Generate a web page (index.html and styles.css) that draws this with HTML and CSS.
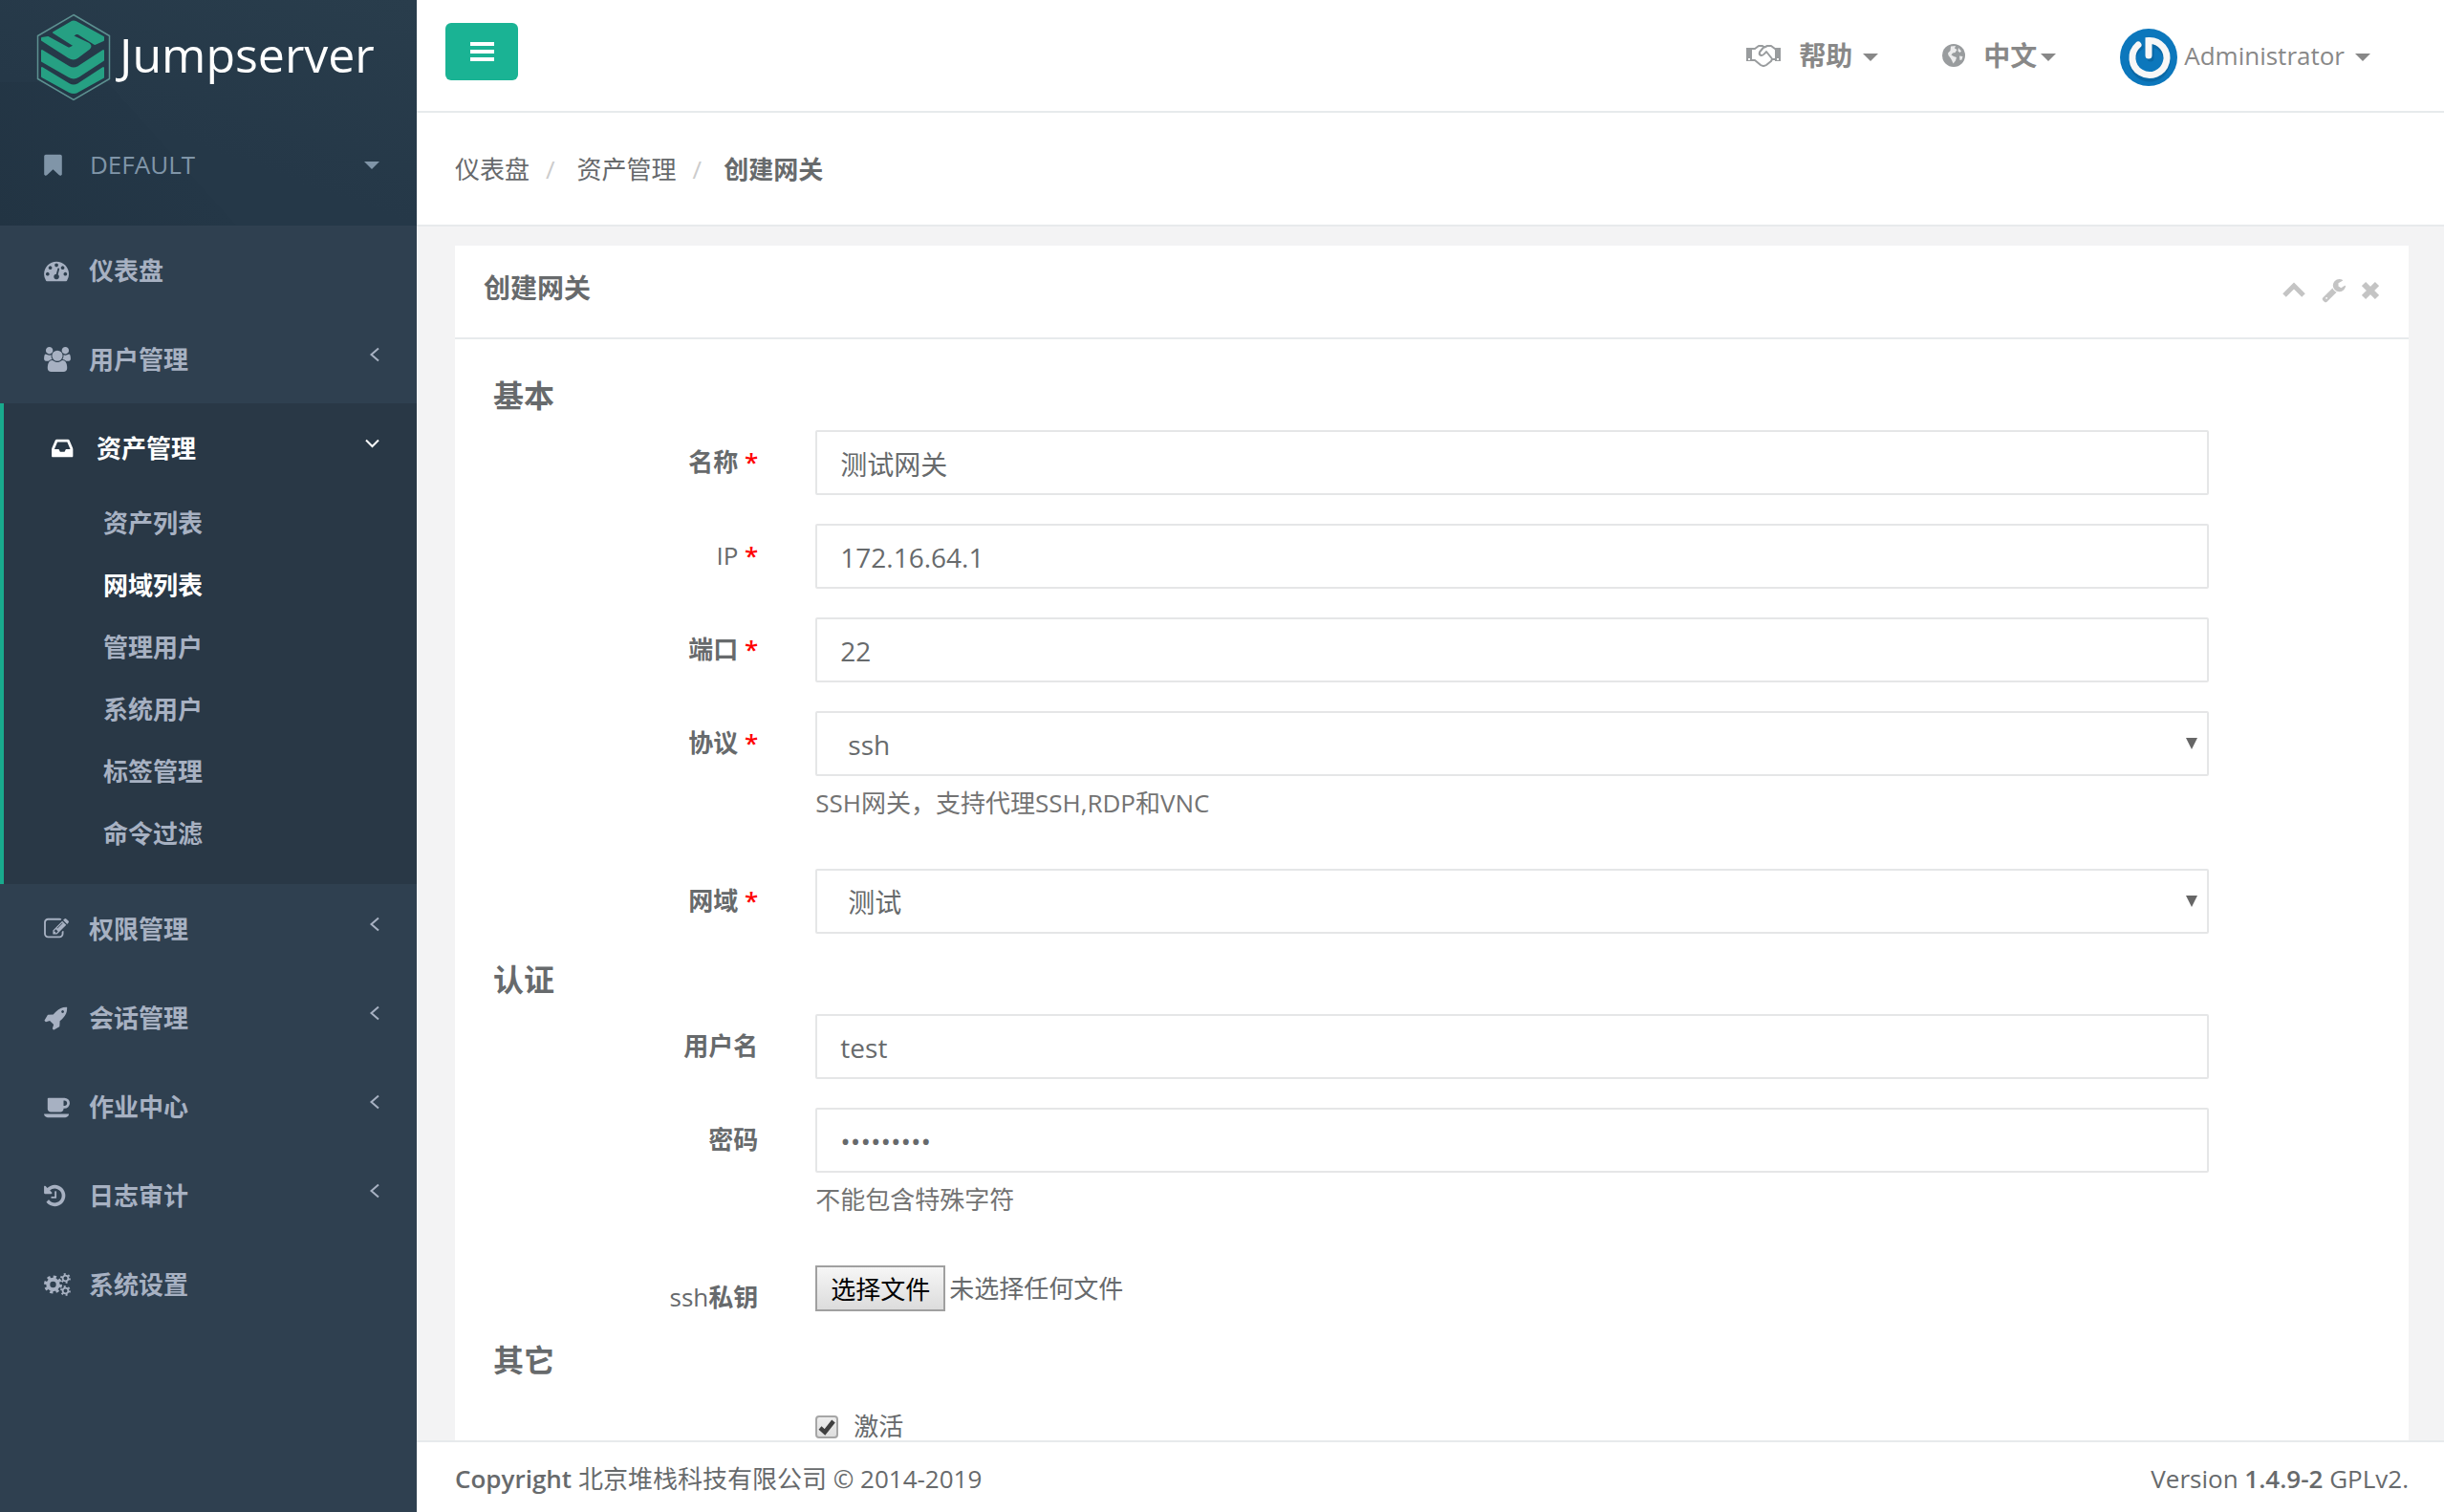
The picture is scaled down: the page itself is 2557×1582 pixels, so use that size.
FILE: index.html
```html
<!DOCTYPE html>
<html lang="zh-CN">
<head>
<meta charset="utf-8">
<title>创建网关 - Jumpserver</title>
<link rel="stylesheet" href="styles.css">
</head>
<body>
<div class="app">
  <aside class="sidebar">
    <div class="brand">
      <a class="logo" href="#">
        <svg class="logo-mark" viewBox="0 0 78 92" aria-hidden="true">
          <path d="M39 1.500 76.500 23.500V68.500L39 90.500 1.500 68.500V23.500Z" fill="none" stroke="#5d9191" stroke-width="1.500"/>
          <g fill="#26a083" stroke="#26a083" stroke-width="2" stroke-linejoin="round">
            <path d="M37 9Q39 8 41 9L70 25V28L61 32 42 20 38 24 55 32Q58 34 55 37L43 46Q39 49 34 46L6 28V26L12 25 34 37 40 34 18 20Z"/>
            <path d="M6 39 34 56Q39 59 44 56L70 39V49L44 66Q39 69 34 66L6 50Z"/>
            <path d="M6 57 34 74Q39 77 44 74L70 57V67L43 82Q39 84 35 82L6 66Z"/>
          </g>
        </svg>
        <span class="logo-text">Jumpserver</span>
      </a>
      <button class="org" type="button">
        <svg class="icon org-icon" viewBox="256 0 1280 1792" aria-hidden="true"><path d="M1420 128q23 0 44 9 33 13 52.500 41t19.500 62v1289q0 34-19.500 62t-52.500 41q-19 8-44 8-48 0-83-32l-441-424-441 424q-36 33-83 33-23 0-44-9-33-13-52.500-41t-19.500-62v-1289q0-34 19.500-62t52.500-41q21-9 44-9h1048z"/></svg>
        <span class="org-name">DEFAULT</span>
        <span class="caret"></span>
      </button>
    </div>
    <nav>
      <ul class="menu">
        <li><a class="menu-link" href="#">
          <svg class="icon" viewBox="0 0 1920 1792" aria-hidden="true"><path d="M384 1152q0-53-37.500-90.500t-90.500-37.500-90.500 37.500-37.500 90.500 37.500 90.500 90.500 37.500 90.500-37.500 37.500-90.500zm192-448q0-53-37.500-90.500t-90.500-37.500-90.500 37.500-37.500 90.500 37.500 90.500 90.500 37.500 90.500-37.500 37.500-90.500zm428 481l101-382q6-26-7.500-48.500t-38.500-29.500-48 6.500-30 39.500l-101 382q-60 5-107 43.500t-63 98.500q-20 77 20 146t117 89 146-20 89-117q16-60-6-117t-72-91zm660-33q0-53-37.500-90.500t-90.500-37.500-90.500 37.500-37.500 90.500 37.500 90.500 90.500 37.500 90.500-37.500 37.500-90.500zm-640-640q0-53-37.500-90.500t-90.500-37.500-90.500 37.500-37.500 90.500 37.500 90.500 90.500 37.500 90.500-37.500 37.500-90.500zm448 192q0-53-37.500-90.500t-90.500-37.500-90.500 37.500-37.500 90.500 37.500 90.500 90.500 37.500 90.500-37.500 37.500-90.500zm320 448q0 261-141 483-19 29-54 29h-1402q-35 0-54-29-141-221-141-483 0-182 71-348t191-286 286-191 348-71 348 71 286 191 191 286 71 348z"/></svg>
          <span class="menu-text">仪表盘</span></a></li>
        <li><a class="menu-link" href="#">
          <svg class="icon" viewBox="-64 0 1920 1792" aria-hidden="true"><path d="M529 896q-162 5-265 128h-134q-82 0-138-40.500t-56-118.500q0-353 124-353 6 0 43.500 21t97.500 42.500 119 21.500q67 0 133-23-5 37-5 66 0 139 81 256zm1071 637q0 120-73 189.500t-194 69.500h-874q-121 0-194-69.500t-73-189.500q0-53 3.500-103.500t14-109 26.500-108.500 43-97.500 62-81 85.500-53.500 111.500-20q10 0 43 21.500t73 48 107 48 135 21.500 135-21.500 107-48 73-48 43-21.500q61 0 111.500 20t85.500 53.500 62 81 43 97.500 26.500 108.500 14 109 3.500 103.500zm-1024-1277q0 106-75 181t-181 75-181-75-75-181 75-181 181-75 181 75 75 181zm704 384q0 159-112.500 271.500t-271.500 112.500-271.500-112.500-112.500-271.500 112.500-271.500 271.500-112.500 271.500 112.500 112.500 271.500zm576 225q0 78-56 118.500t-138 40.500h-134q-103-123-265-128 81-117 81-256 0-29-5-66 66 23 133 23 59 0 119-21.500t97.500-42.500 43.500-21q124 0 124 353zm-128-609q0 106-75 181t-181 75-181-75-75-181 75-181 181-75 181 75 75 181z"/></svg>
          <span class="menu-text">用户管理</span>
          <svg class="arrow" viewBox="0 0 16 16" aria-hidden="true"><path d="M14 1.500 6.500 8 14 14.500"/></svg></a></li>
        <li class="active"><a class="menu-link" href="#">
          <svg class="icon" viewBox="128 0 1920 1792" aria-hidden="true"><path d="M1151 960h316q-1-3-2.500-8.500t-2.500-7.500l-212-496h-708l-212 496q-1 3-2.500 8.500t-2.500 7.500h316l95 192h320zm513 30v482q0 26-19 45t-45 19h-1408q-26 0-45-19t-19-45v-482q0-62 25-123l238-552q10-25 36.500-42t52.500-17h832q26 0 52.500 17t36.500 42l238 552q25 61 25 123z"/></svg>
          <span class="menu-text">资产管理</span>
          <svg class="arrow" viewBox="0 0 16 16" aria-hidden="true"><path d="M1 4.500 7.500 11 14 4.500"/></svg></a>
          <ul class="submenu">
            <li><a href="#">资产列表</a></li>
            <li><a class="current" href="#">网域列表</a></li>
            <li><a href="#">管理用户</a></li>
            <li><a href="#">系统用户</a></li>
            <li><a href="#">标签管理</a></li>
            <li><a href="#">命令过滤</a></li>
          </ul></li>
        <li><a class="menu-link" href="#">
          <svg class="icon" viewBox="0 0 1920 1792" aria-hidden="true"><path d="M888 1184l116-116-152-152-116 116v56h96v96h56zm440-720q-16-16-33 1l-350 350q-17 17-1 33t33-1l350-350q17-17 1-33zm80 594v190q0 119-84.500 203.500t-203.500 84.500h-832q-119 0-203.500-84.500t-84.500-203.500v-832q0-119 84.500-203.500t203.500-84.500h832q63 0 117 25 15 7 18 23 3 17-9 29l-49 49q-14 14-32 8-23-6-45-6h-832q-66 0-113 47t-47 113v832q0 66 47 113t113 47h832q66 0 113-47t47-113v-126q0-13 9-22l64-64q15-15 35-7t20 29zm-96-738l288 288-672 672h-288v-288zm444 132l-92 92-288-288 92-92q28-28 68-28t68 28l152 152q28 28 28 68t-28 68z"/></svg>
          <span class="menu-text">权限管理</span>
          <svg class="arrow" viewBox="0 0 16 16" aria-hidden="true"><path d="M14 1.500 6.500 8 14 14.500"/></svg></a></li>
        <li><a class="menu-link" href="#">
          <svg class="icon" viewBox="0 0 1920 1792" aria-hidden="true"><path d="M1440 448q0-40-28-68t-68-28-68 28-28 68 28 68 68 28 68-28 28-68zm224-288q0 249-75.500 430.500t-253.500 360.500q-81 80-195 176l-20 379q-2 16-16 26l-384 224q-7 4-16 4-12 0-23-9l-64-64q-13-14-8-32l85-276-281-281-276 85q-3 1-9 1-14 0-23-9l-64-64q-17-19-5-39l224-384q10-14 26-16l379-20q96-114 176-195 188-187 358-258t431-71q14 0 24 9.500t10 22.500z"/></svg>
          <span class="menu-text">会话管理</span>
          <svg class="arrow" viewBox="0 0 16 16" aria-hidden="true"><path d="M14 1.500 6.500 8 14 14.500"/></svg></a></li>
        <li><a class="menu-link" href="#">
          <svg class="icon" viewBox="0 0 1920 1792" aria-hidden="true"><path d="M1664 640q0-80-56-136t-136-56h-64v384h64q80 0 136-56t56-136zm-1664 768h1792q0 106-75 181t-181 75h-1280q-106 0-181-75t-75-181zm1856-768q0 159-112.500 271.500t-271.500 112.500h-64v32q0 92-66 158t-158 66h-704q-92 0-158-66t-66-158v-736q0-26 19-45t45-19h1152q159 0 271.500 112.500t112.500 271.500z"/></svg>
          <span class="menu-text">作业中心</span>
          <svg class="arrow" viewBox="0 0 16 16" aria-hidden="true"><path d="M14 1.500 6.500 8 14 14.500"/></svg></a></li>
        <li><a class="menu-link" href="#">
          <svg class="icon" viewBox="128 0 1920 1792" aria-hidden="true"><path d="M1664 896q0 156-61 298t-164 245-245 164-298 61q-172 0-327-72.500t-264-204.500q-7-10-6.500-22.500t8.500-20.500l137-138q10-9 25-9 16 2 23 12 73 95 179 147t225 52q104 0 198.500-40.500t163.500-109.500 109.500-163.500 40.500-198.500-40.500-198.500-109.500-163.500-163.500-109.500-198.500-40.500q-98 0-188 35.500t-160 101.500l137 138q31 30 14 69-17 40-59 40h-448q-26 0-45-19t-19-45v-448q0-42 40-59 39-17 69 14l130 129q107-101 244.500-156.500t284.500-55.500q156 0 298 61t245 164 164 245 61 298zm-640-288v448q0 14-9 23t-23 9h-320q-14 0-23-9t-9-23v-64q0-14 9-23t23-9h224v-352q0-14 9-23t23-9h64q14 0 23 9t9 23z"/></svg>
          <span class="menu-text">日志审计</span>
          <svg class="arrow" viewBox="0 0 16 16" aria-hidden="true"><path d="M14 1.500 6.500 8 14 14.500"/></svg></a></li>
        <li><a class="menu-link" href="#">
          <svg class="icon" viewBox="0 0 28 26" aria-hidden="true">
            <g fill="none" stroke="currentColor">
              <circle cx="9.500" cy="13" r="5.200" stroke-width="4"/>
              <circle cx="9.500" cy="13" r="8" stroke-width="3" stroke-dasharray="3.200 3.083"/>
              <circle cx="22.500" cy="6.500" r="2.900" stroke-width="1.800"/>
              <circle cx="22.500" cy="6.500" r="4.500" stroke-width="1.800" stroke-dasharray="2 2.712"/>
              <circle cx="22.500" cy="19.500" r="2.900" stroke-width="1.800"/>
              <circle cx="22.500" cy="19.500" r="4.500" stroke-width="1.800" stroke-dasharray="2 2.712"/>
            </g></svg>
          <span class="menu-text">系统设置</span></a></li>
      </ul>
    </nav>
  </aside>

  <div class="page">
    <header class="topbar">
      <button class="toggle" type="button" aria-label="切换菜单">
        <svg viewBox="0 0 25 20" aria-hidden="true"><path d="M0 2H25M0 10H25M0 18H25" stroke="#fff" stroke-width="4"/></svg>
      </button>
      <div class="top-links">
        <a class="top-link help" href="#">
          <svg class="hands" viewBox="0 0 36 24" aria-hidden="true">
            <path d="M0 4H6V18H0ZM30 4H36V18H30Z" fill="currentColor"/>
            <g fill="none" stroke="currentColor" stroke-width="2" stroke-linejoin="round" stroke-linecap="round">
              <path d="M6 5H9L13 2H17L19 3.500 22 2H26L30 5M6 17H9L15 22Q18 24 21 22L26 18 27 16H30"/>
              <path d="M18.500 3 14 8.500Q13 11 15.500 12 18 12 21 8L27 15.500"/>
            </g>
            <path d="M2 15h2v2H2zM32 15h2v2h-2z" fill="#fff"/>
          </svg>
          <strong>帮助</strong><span class="caret"></span></a>
        <a class="top-link lang" href="#">
          <svg class="globe" viewBox="0 0 24 24" aria-hidden="true">
            <circle cx="12" cy="12" r="12" fill="currentColor"/>
            <path d="M9 2.500 14 2 13 4.500 15.500 6 13.500 9 11 9.500 9.500 11.500 12 13 15 14 14 17.500 11.500 20.500 10 17 8.500 14.500 6.500 12 6 9.500 8.500 7ZM17 4 20 7.500 18.500 9 16.500 7.500ZM18 12.500 21.500 13 20.500 16.500 18.500 17Z" fill="#fff" opacity=".8"/>
          </svg>
          <strong>中文</strong><span class="caret"></span></a>
        <a class="top-link user" href="#">
          <svg class="avatar" viewBox="0 0 60 60" aria-hidden="true">
            <circle cx="30" cy="30" r="30" fill="#0c77bc"/>
            <g fill="none" stroke-width="7" stroke-linecap="round">
              <g stroke="#075a92" opacity=".5"><path d="M20 17A18 18 0 1 0 31 14V29" transform="translate(1 2)"/></g>
              <path d="M19 17A18 18 0 1 0 30 12.500V28" stroke="#f7f7f7"/>
            </g>
          </svg>
          <span class="user-name">Administrator</span><span class="caret"></span></a>
      </div>
    </header>

    <nav class="crumbs" aria-label="路径">
      <ol>
        <li><a href="#">仪表盘</a></li>
        <li><a href="#">资产管理</a></li>
        <li><strong>创建网关</strong></li>
      </ol>
    </nav>

    <main class="content">
      <section class="card">
        <div class="card-head">
          <h5>创建网关</h5>
          <div class="tools">
            <button type="button" aria-label="折叠"><svg viewBox="0 0 26 26" aria-hidden="true"><path d="M3 18 13 8 23 18" fill="none" stroke="currentColor" stroke-width="5"/></svg></button>
            <button type="button" aria-label="设置"><svg viewBox="64 64 1700 1750" aria-hidden="true"><path fill="currentColor" d="M448 1472q0-26-19-45t-45-19-45 19-19 45 19 45 45 19 45-19 19-45zm644-420l-682 682q-37 37-90 37-52 0-91-37l-106-108q-38-36-38-90 0-53 38-91l681-681q39 98 114.500 173.500t173.500 114.500zm634-435q0 39-23 106-47 134-164.500 217.500t-258.500 83.500q-185 0-316.500-131.500t-131.500-316.500 131.500-316.500 316.500-131.500q58 0 121.500 16.500t107.500 46.500q16 11 16 28t-16 28l-293 169v224l193 107q5-3 79-48.500t135.500-81 70.500-35.500q15 0 23.500 10t8.500 25z"/></svg></button>
            <button class="close" type="button" aria-label="关闭"><svg viewBox="0 0 18 26" aria-hidden="true"><path d="M2 6 16 20M16 6 2 20" stroke="currentColor" stroke-width="6"/></svg></button>
          </div>
        </div>
        <form class="card-body">
          <h3>基本</h3>
          <div class="row">
            <label for="name">名称 <em>*</em></label>
            <div class="field"><input class="control" id="name" type="text" value="测试网关"></div>
          </div>
          <div class="row">
            <label for="ip"><span class="latin">IP</span> <em>*</em></label>
            <div class="field"><input class="control" id="ip" type="text" value="172.16.64.1"></div>
          </div>
          <div class="row">
            <label for="port">端口 <em>*</em></label>
            <div class="field"><input class="control" id="port" type="text" value="22"></div>
          </div>
          <div class="row">
            <label for="protocol">协议 <em>*</em></label>
            <div class="field">
              <select class="control" id="protocol"><option>ssh</option></select>
              <p class="help-text">SSH网关，支持代理SSH,RDP和VNC</p>
            </div>
          </div>
          <div class="row">
            <label for="domain">网域 <em>*</em></label>
            <div class="field"><select class="control" id="domain"><option>测试</option></select></div>
          </div>
          <h3>认证</h3>
          <div class="row">
            <label for="username">用户名</label>
            <div class="field"><input class="control" id="username" type="text" value="test"></div>
          </div>
          <div class="row">
            <label for="password">密码</label>
            <div class="field">
              <input class="control" id="password" type="password" value="password1">
              <p class="help-text">不能包含特殊字符</p>
            </div>
          </div>
          <div class="row">
            <label for="key"><span class="latin">ssh</span>私钥</label>
            <div class="field file">
              <input class="file-input" id="key" type="file">
              <label class="file-button" for="key">选择文件</label>
              <span>未选择任何文件</span>
            </div>
          </div>
          <h3>其它</h3>
          <div class="row">
            <div class="field check">
              <input id="active" type="checkbox" checked>
              <label for="active">激活</label>
            </div>
          </div>
        </form>
      </section>
    </main>

    <footer class="footer">
      <div><strong>Copyright</strong> 北京堆栈科技有限公司 © 2014-2019</div>
      <div>Version <strong>1.4.9-2</strong> GPLv2.</div>
    </footer>
  </div>
</div>
</body>
</html>
```
FILE: styles.css
```css
* { box-sizing: border-box; }

body {
  margin: 0;
  font: 26px/36px "Open Sans", "Noto Sans CJK SC", sans-serif;
  color: #676a6c;
  background: #2f4050;
}

a { color: inherit; text-decoration: none; }
ul, ol { margin: 0; padding: 0; list-style: none; }
button { font: inherit; border: 0; cursor: pointer; }
strong { font-weight: 600; }

.app { display: flex; height: 100vh; }

.caret {
  flex: none;
  border: 8px solid transparent;
  border-top-color: currentColor;
  border-bottom: 0;
}

/* sidebar */
.sidebar {
  flex: none;
  width: 436px;
  background: #2f4050;
  color: #a7b1c2;
}

.brand {
  height: 236px;
  background:
    linear-gradient(48deg, #223443 0%, #243747 50%, transparent 50%) 0 100% / 360px 150px no-repeat,
    linear-gradient(200deg, #293d4c, #253848 60%);
}

.logo {
  display: flex;
  align-items: center;
  gap: 9px;
  height: 120px;
  padding-left: 38px;
}
.logo-mark { width: 78px; height: 92px; }
.logo-text {
  padding-bottom: 6px;
  font-size: 50px;
  line-height: 60px;
  font-weight: 400;
  color: #fff;
}

.org {
  display: flex;
  align-items: center;
  width: 100%;
  height: 106px;
  padding: 0 39px 0 46px;
  background: none;
  color: #8095a8;
  text-align: left;
}
.org .org-icon { width: 19px; height: 26px; margin-right: 29px; }
.org-name { flex: 1; padding-bottom: 2px; }

.icon { flex: none; width: 28px; height: 26px; fill: currentColor; }

.menu-link {
  display: flex;
  align-items: center;
  gap: 19px;
  height: 93px;
  padding: 0 38px 0 46px;
}
.menu-text { flex: 1; font-weight: 700; }
.arrow {
  width: 16px;
  height: 16px;
  margin-bottom: 10px;
  fill: none;
  stroke: currentColor;
  stroke-width: 2;
}

.active {
  padding-bottom: 20px;
  background: #293846;
  border-left: 4px solid #19aa8d;
}
.active > .menu-link { padding-left: 50px; color: #fff; }
.submenu a {
  display: block;
  padding-left: 104px;
  line-height: 65px;
  font-weight: 700;
}
.submenu .current { color: #fff; }

/* page column */
.page {
  flex: 1;
  min-width: 0;
  display: flex;
  flex-direction: column;
  background: #f3f3f4;
}

.topbar {
  display: flex;
  justify-content: space-between;
  align-items: flex-start;
  flex: none;
  height: 118px;
  padding: 24px 77px 0 30px;
  background: #fff;
  border-bottom: 2px solid #e7eaec;
}
.toggle {
  display: grid;
  place-items: center;
  width: 76px;
  height: 60px;
  border-radius: 6px;
  background: #1ab394;
}
.toggle svg { width: 25px; height: 20px; }

.top-links { display: flex; align-items: center; height: 72px; color: #888; }
.top-link { display: flex; align-items: center; }
.top-link strong { padding-bottom: 5px; font-size: 28px; font-weight: 700; }
.user-name { padding-bottom: 5px; }
.hands { width: 36px; height: 24px; margin: 0 19px 4px 0; color: #999c9e; }
.help .caret { margin-left: 11px; }
.lang { margin: 0 67px; }
.globe { width: 24px; height: 24px; margin: 0 19px 4px 0; color: #999c9e; }
.lang .caret { margin-left: 4px; }
.avatar { width: 60px; height: 60px; margin-right: 7px; }
.user .caret { margin-left: 11px; }

.crumbs {
  flex: none;
  padding: 41px 40px 40px;
  background: #fff;
  border-bottom: 2px solid #e7eaec;
}
.crumbs ol { display: flex; }
.crumbs li + li::before {
  content: "/";
  padding: 0 23px 0 17px;
  color: #ccc;
}
.crumbs strong { font-weight: 700; }

.content {
  flex: 1;
  min-height: 0;
  display: flex;
  flex-direction: column;
  padding: 20px 37px 0 40px;
  overflow-y: auto;
  scrollbar-width: none;
}

.card { flex: 1 0 auto; background: #fff; }
.card-head {
  display: flex;
  justify-content: space-between;
  padding: 26px 31px 34px 30px;
  border-bottom: 2px solid #e7eaec;
}
h5 { margin: 0; font-size: 28px; line-height: 36px; font-weight: 700; }
.tools { display: flex; align-items: center; gap: 16px; padding-top: 6px; color: #c4c4c4; }
.tools button { display: flex; padding: 0; background: none; color: inherit; }
.tools svg { width: 26px; height: 26px; }
.tools .close svg { width: 18px; }

.card-body { padding: 41px 40px 0; }
h3 { margin: 0 0 18px; font-size: 32px; line-height: 36px; font-weight: 700; }

.row {
  display: grid;
  grid-template-columns: 2fr 9fr 1fr;
  margin: 0 -30px 30px;
}
.row > label {
  padding: 15px 30px 0 0;
  text-align: right;
  font-weight: 600;
}
.row .latin { font-weight: 500; }
.row em { font-style: normal; color: #f00; }
.field { grid-column: 2; padding: 0 30px; }

.control {
  display: block;
  width: 100%;
  height: 68px;
  padding: 1px 24px 0;
  border: 2px solid #e5e6e7;
  border-radius: 2px;
  background: #fff;
  font: inherit;
  font-size: 28px;
  color: inherit;
}
select.control {
  appearance: none;
  padding-left: 32px;
  background: #fff url("data:image/svg+xml,%3Csvg xmlns='http://www.w3.org/2000/svg' width='12' height='12'%3E%3Cpath d='M0 0H12L6 12Z' fill='%23666'/%3E%3C/svg%3E") no-repeat right 10px top 26px;
}

.help-text { margin: 10px 0 21px; color: #737373; }

.file { display: flex; align-items: flex-start; gap: 4px; line-height: 48px; }
.file-input { position: absolute; width: 1px; height: 1px; opacity: 0; }
.file-button {
  height: 48px;
  padding: 0 14px;
  border: 2px solid #a0a0a0;
  background: linear-gradient(#f6f6f6, #dcdcdc);
  color: #000;
  line-height: 46px;
}

.check { display: flex; align-items: center; gap: 16px; padding-top: 15px; }
.check input {
  appearance: none;
  width: 24px;
  height: 24px;
  margin: 2px 0 0;
  border: 2px solid #a6a6a6;
  border-radius: 4px;
  background: url("data:image/svg+xml,%3Csvg xmlns='http://www.w3.org/2000/svg' viewBox='0 0 20 20'%3E%3Cpath d='M3 11 8 15.500 17 4' fill='none' stroke='%23404040' stroke-width='4.500'/%3E%3C/svg%3E") center / 20px 20px, linear-gradient(#ededed, #dedede);
}

.footer {
  display: flex;
  justify-content: space-between;
  flex: none;
  padding: 20px 37px 17px 40px;
  background: #fff;
  border-top: 2px solid #e7eaec;
}
```
